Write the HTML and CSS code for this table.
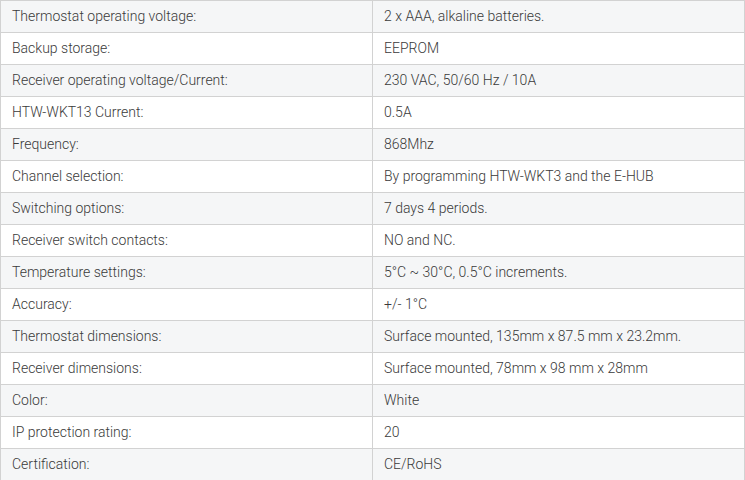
FILE: index.html
```html
<!DOCTYPE html>
<html>
<head>
<meta charset="utf-8">
<link rel="stylesheet" href="styles.css">
</head>
<body>
<table class="specs">
<tbody>
<tr><td class="k">Thermostat operating voltage:</td><td class="v">2 x AAA, alkaline batteries.</td></tr>
<tr><td class="k">Backup storage:</td><td class="v">EEPROM</td></tr>
<tr><td class="k">Receiver operating voltage/Current:</td><td class="v">230 VAC, 50/60 Hz / 10A</td></tr>
<tr><td class="k">HTW-WKT13 Current:</td><td class="v">0.5A</td></tr>
<tr><td class="k">Frequency:</td><td class="v">868Mhz</td></tr>
<tr><td class="k">Channel selection:</td><td class="v">By programming HTW-WKT3 and the E-HUB</td></tr>
<tr><td class="k">Switching options:</td><td class="v">7 days 4 periods.</td></tr>
<tr><td class="k">Receiver switch contacts:</td><td class="v">NO and NC.</td></tr>
<tr><td class="k">Temperature settings:</td><td class="v">5°C ~ 30°C, 0.5°C increments.</td></tr>
<tr><td class="k">Accuracy:</td><td class="v">+/- 1°C</td></tr>
<tr><td class="k">Thermostat dimensions:</td><td class="v">Surface mounted, 135mm x 87.5 mm x 23.2mm.</td></tr>
<tr><td class="k">Receiver dimensions:</td><td class="v">Surface mounted, 78mm x 98 mm x 28mm</td></tr>
<tr><td class="k">Color:</td><td class="v">White</td></tr>
<tr><td class="k">IP protection rating:</td><td class="v">20</td></tr>
<tr><td class="k">Certification:</td><td class="v">CE/RoHS</td></tr>
</tbody>
</table>
</body>
</html>
```
FILE: styles.css
```css
html, body {
  margin: 0;
  padding: 0;
  background: #ffffff;
}
.specs {
  width: 745px;
  border-collapse: collapse;
  table-layout: fixed;
  font-family: Roboto, "Liberation Sans", sans-serif;
  font-size: 14px;
  font-weight: 300;
  color: #3a3a3a;
}
.specs td {
  border: 1px solid #d2d2d2;
  height: 32px;
  padding: 0 11px 2px 11px;
  box-sizing: border-box;
  vertical-align: middle;
  white-space: nowrap;
}
.specs tr:nth-child(odd) td {
  background: #f5f6f7;
}
.specs td.k {
  width: 372px;
}
```
